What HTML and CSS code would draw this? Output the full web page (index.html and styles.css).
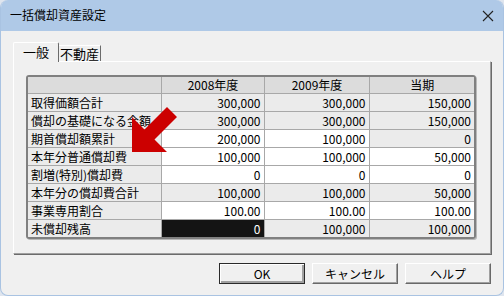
FILE: index.html
```html
<!DOCTYPE html>
<html lang="ja">
<head>
	<meta charset="utf-8">
	<title>一括償却資産設定</title>
	<link rel="stylesheet" href="styles.css">
</head>
<body>
	<div class="window">
		<div class="titlebar">
			<span class="title">一括償却資産設定</span>
			<svg class="close" width="12" height="12" viewBox="0 0 12 12">
				<path d="M1 1 L11 11 M11 1 L1 11" stroke="#222" stroke-width="1.1" fill="none"/>
			</svg>
		</div>

		<div class="client">
			<div class="tabs">
				<div class="tab active">一般</div>
				<div class="tab">不動産</div>
			</div>

			<div class="panel">
				<div class="grid">
					<table>
						<colgroup>
							<col class="c-label">
							<col class="c-num1">
							<col class="c-num2">
							<col class="c-num3">
						</colgroup>
						<tr class="head">
							<th></th><th>2008年度</th><th>2009年度</th><th>当期</th>
						</tr>
						<tr>
							<td class="label">取得価額合計</td>
							<td class="ro">300,000</td><td class="ro">300,000</td><td class="ro">150,000</td>
						</tr>
						<tr>
							<td class="label">償却の基礎になる金額</td>
							<td class="ro">300,000</td><td class="ro">300,000</td><td class="ro">150,000</td>
						</tr>
						<tr>
							<td class="label">期首償却額累計</td>
							<td>200,000</td><td>100,000</td><td class="ro">0</td>
						</tr>
						<tr>
							<td class="label">本年分普通償却費</td>
							<td>100,000</td><td>100,000</td><td>50,000</td>
						</tr>
						<tr>
							<td class="label">割増(特別)償却費</td>
							<td>0</td><td>0</td><td>0</td>
						</tr>
						<tr>
							<td class="label">本年分の償却費合計</td>
							<td class="ro">100,000</td><td class="ro">100,000</td><td class="ro">50,000</td>
						</tr>
						<tr>
							<td class="label">事業専用割合</td>
							<td>100.00</td><td>100.00</td><td>100.00</td>
						</tr>
						<tr>
							<td class="label">未償却残高</td>
							<td class="selected">0</td><td class="ro">100,000</td><td class="ro">100,000</td>
						</tr>
					</table>
				</div>
			</div>

			<div class="buttons">
				<button class="btn default">OK</button>
				<button class="btn">キャンセル</button>
				<button class="btn">ヘルプ</button>
			</div>
		</div>

		<!-- annotation arrow drawn over the grid -->
		<svg class="arrow" width="504" height="296" viewBox="0 0 504 296">
			<polygon points="132,152 132,117 144.5,129.5 167,107 177,117 154.5,139.5 167,152" fill="#cc0000"/>
		</svg>
	</div>
</body>
</html>
```

FILE: styles.css
```css
html, body {
	margin: 0;
	padding: 0;
	background: #dfe5ee;
}

body {
	font-family: "Noto Sans CJK JP", "DejaVu Sans", sans-serif;
	font-size: 12px;
	color: #000;
}

.window {
	position: relative;
	width: 502px;
	height: 295px;
	background: #f0f0f0;
	border: 1px solid #a9c3e2;
	border-top: none;
	border-radius: 8px;
	overflow: hidden;
}

.titlebar {
	height: 31px;
	background: #afc9e7;
	display: flex;
	align-items: center;
	justify-content: space-between;
	padding: 0 9px 0 9px;
}

.title {
	font-size: 12px;
	line-height: 16px;
	margin-top: -1px;
}

.client {
	padding: 11px 12px 0 12px;
}

/* tabs */
.tabs {
	display: flex;
	align-items: flex-end;
	height: 19px;
	position: relative;
	z-index: 1;
}

.tab {
	height: 15px;
	line-height: 15px;
	padding: 0 1px;
	font-size: 13px;
	border-top: 1px solid #fff;
	border-right: 1px solid #6b6b6b;
	background: #f0f0f0;
	text-align: center;
}

.tab.active {
	width: 42px;
	height: 19px;
	line-height: 17px;
	margin-bottom: -1px;
	padding: 0 1px;
	border-left: 1px solid #fff;
	border-radius: 2px 2px 0 0;
}

/* panel */
.panel {
	box-sizing: border-box;
	height: 193px;
	padding: 13px 0 0 12px;
	border: 1px solid #fff;
	border-right: 1px solid #a0a0a0;
	border-bottom: 1px solid #a0a0a0;
	box-shadow: 1px 1px 0 #6b6b6b;
}

.grid {
	width: 446px;
	border: 2px solid #808080;
	border-radius: 3px;
	box-shadow: 1px 1px 0 #b8b8b8;
	overflow: hidden;
}

table {
	border-collapse: collapse;
	table-layout: fixed;
	width: 446px;
}

.c-label { width: 133px; }
.c-num1 { width: 103px; }
.c-num2 { width: 105px; }
.c-num3 { width: 105px; }

th, td {
	height: 17px;
	padding: 0 3px 0 4px;
	line-height: 16px;
	border: 1px solid #a8a8a8;
	background: #fff;
	text-align: right;
	font-weight: normal;
	white-space: nowrap;
	overflow: hidden;
}

tr.head th {
	height: 15px;
	border-top: none;
	background: #dcdcdc;
	text-align: center;
}

tr:last-child td {
	border-bottom: none;
}

th:first-child, td:first-child {
	border-left: none;
}

th:last-child, td:last-child {
	border-right: none;
}

td.label {
	background: #ebebeb;
	text-align: left;
	padding-left: 3px;
}

td.ro {
	background: #ebebeb;
}

td.selected {
	background: #141414;
	color: #fff;
}

/* buttons */
.buttons {
	display: flex;
	justify-content: flex-end;
	gap: 7px;
	padding-top: 9px;
}

.btn {
	width: 86px;
	height: 21px;
	padding: 0;
	font-family: inherit;
	font-size: 12px;
	line-height: 16px;
	background: #f0f0f0;
	border: 1px solid;
	border-color: #fff #696969 #696969 #fff;
	box-shadow: inset -1px -1px 0 #a0a0a0;
	color: #000;
}

.btn.default {
	border: 1px solid #2a2a2a;
	box-shadow: inset 1px 1px 0 #fff, inset -2px -2px 0 #a0a0a0;
}

.arrow {
	position: absolute;
	left: -1px;
	top: 0;
	pointer-events: none;
}
```
